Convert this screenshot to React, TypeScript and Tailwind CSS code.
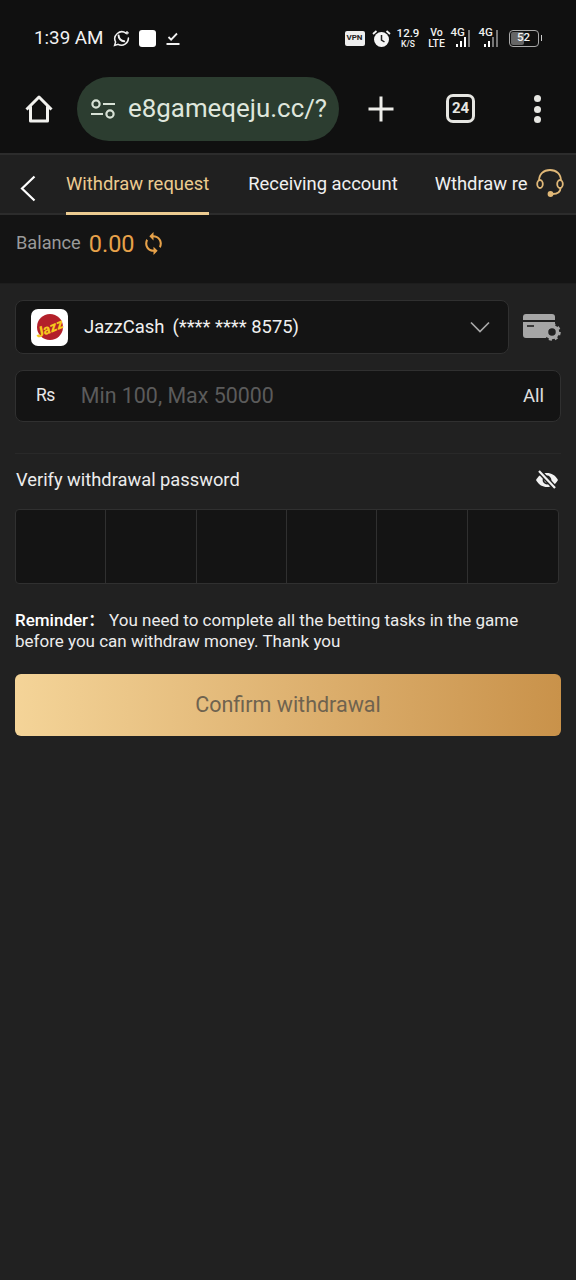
import { MdSync } from 'react-icons/md'

const font = { fontFamily: 'Roboto, sans-serif' }

function WhatsAppIcon() {
  return (
    <svg width="17" height="17" viewBox="0 0 17 17" fill="none" stroke="#f2f2f2" strokeWidth="1.5">
      <path d="M13 3.2A7 7 0 0 0 2.6 12l-1 3.4 3.5-1A7 7 0 0 0 15.4 8" strokeLinecap="round" />
      <path d="M5.6 5.6c0 3 2.6 5.6 5.6 5.6" strokeWidth="2" strokeLinecap="round" />
      <path d="M14 1v3.6M12.2 2.8h3.6" strokeWidth="1.2" />
    </svg>
  )
}

function HomeIcon() {
  return (
    <svg width="30" height="30" viewBox="0 0 30 30" fill="none" stroke="#f1f1ee" strokeWidth="3" strokeLinejoin="round">
      <path d="M2.5 15.5 15 3l12.5 12.5M6.5 12.5V27h17V12.5" />
    </svg>
  )
}

function TuneIcon() {
  return (
    <svg width="26" height="20" viewBox="0 0 26 20" fill="none" stroke="#d8e2d6" strokeWidth="2.2">
      <circle cx="6" cy="5" r="3.6" />
      <circle cx="20" cy="15" r="3.6" />
      <path d="M13 5h12M1 15h12" />
    </svg>
  )
}

function SignalIcon({ faded }: { faded?: boolean }) {
  const bars = faded ? ['#fff', '#fff', '#777', '#777'] : ['#fff', '#fff', '#fff', '#777']
  return (
    <div className="relative h-[18px] w-[19px] leading-none">
      <span className="absolute -top-[2px] left-0 text-[11.5px] font-medium text-[#eee]">4G</span>
      <div className="absolute bottom-0 right-0 flex items-end gap-[2px]">
        {[3, 6, 10, 17].map((h, i) => (
          <div key={i} className="w-[2px]" style={{ height: h, backgroundColor: bars[i] }} />
        ))}
      </div>
    </div>
  )
}

function StatusBar() {
  return (
    <div className="flex h-[75px] items-center bg-[#101010] pl-[34px] pr-[34px] pt-[1px] text-[#f2f2f2]">
      <span className="text-[18.8px] leading-none">1:39 AM</span>
      <div className="ml-[9px] flex items-center gap-[9px]">
        <WhatsAppIcon />
        <div className="h-[17px] w-[17px] rounded-[3px] bg-white" />
        <svg className="ml-[1px]" width="14" height="15" viewBox="0 0 14 15" fill="none" stroke="#f2f2f2" strokeWidth="1.8">
          <path d="m2.5 6 2.6 2.6L11 2.5M.5 13h13" />
        </svg>
      </div>
      <div className="ml-auto flex items-center">
        <div className="flex h-[15px] w-[20px] items-center justify-center rounded-[2px] bg-[#eee] text-[8px] font-bold leading-none text-[#222]">
          VPN
        </div>
        <svg className="ml-[7px]" width="19" height="19" viewBox="0 0 19 19">
          <circle cx="9.5" cy="10.5" r="7.5" fill="#f5f5f5" />
          <path d="M9.5 6v5l3 2" fill="none" stroke="#222" strokeWidth="1.5" />
          <path d="M1 5l3.5-3M18 5l-3.5-3" stroke="#f5f5f5" strokeWidth="1.8" />
        </svg>
        <div className="ml-[6px] flex w-[23px] flex-col items-center leading-none">
          <span className="text-[11.5px] font-medium">12.9</span>
          <span className="text-[8.5px] font-medium">K/S</span>
        </div>
        <div className="ml-[9px] flex w-[16px] flex-col items-center text-[10.5px] font-medium leading-[11px]">
          <span>Vo</span>
          <span>LTE</span>
        </div>
        <div className="ml-[6px] flex gap-[9px]">
          <SignalIcon />
          <SignalIcon faded />
        </div>
        <div className="ml-[11px] flex h-[17px] w-[30px] items-center rounded-[4px] border border-[#aaa] p-[1px]">
          <div className="relative flex h-full w-full items-center justify-center text-[11.5px] font-medium leading-none">
            <div className="absolute inset-y-0 left-0 w-[52%] rounded-[2px] bg-[#666]" />
            <span className="relative">52</span>
          </div>
        </div>
        <div className="ml-[2px] h-[6px] w-[1.5px] bg-[#ccc]" />
      </div>
    </div>
  )
}

function BrowserBar() {
  return (
    <div className="flex h-[78px] items-start bg-[#101010] pt-[2px]">
      <div className="flex w-[77px] justify-center pt-[17px]">
        <HomeIcon />
      </div>
      <div className="flex h-[64px] w-[262px] items-center overflow-hidden rounded-full bg-[#2c3d30] pl-[13px]">
        <TuneIcon />
        <span className="ml-[12px] whitespace-nowrap text-[25.9px] leading-none text-[#dfe6dc]">e8gameqeju.cc/?</span>
      </div>
      <svg className="ml-[28px] mt-[18px]" width="28" height="28" viewBox="0 0 28 28" stroke="#eeeeea" strokeWidth="3">
        <path d="M14 1.5v25M1.5 14h25" />
      </svg>
      <div className="ml-[51px] mt-[17px] flex h-[29px] w-[29px] items-center justify-center rounded-[7px] border-[3px] border-[#e6e6e2] text-[15px] font-bold leading-none text-[#e6e6e2]">
        24
      </div>
      <div className="ml-[59px] mt-[18px] flex flex-col gap-[3.5px]">
        {[0, 1, 2].map((i) => (
          <div key={i} className="h-[7px] w-[7px] rounded-full bg-[#e6e6e2]" />
        ))}
      </div>
    </div>
  )
}

function TabBar() {
  return (
    <div className="relative flex h-[62px] items-start border-y-2 border-[#2c2c2c] bg-[#202020] text-[18.4px] leading-none text-[#f0f0f0]">
      <svg className="ml-[20px] mt-[20px] shrink-0" width="16" height="27" viewBox="0 0 16 27" fill="none" stroke="#fff" strokeWidth="2.2">
        <path d="M14.5 1.500 2 13.500l12.500 12" />
      </svg>
      <div className="relative ml-[30px] flex h-[58px] shrink-0 pt-[20px] text-[#eccb90]">
        Withdraw request
        <div className="absolute -bottom-[2px] left-0 right-0 h-[3px] bg-[#eccb90]" />
      </div>
      <div className="ml-[39px] shrink-0 pt-[20px]">Receiving account</div>
      <div className="ml-[37px] w-[93px] shrink-0 overflow-hidden whitespace-nowrap pt-[20px]">Wthdraw request</div>
      <svg className="absolute right-[11px] top-[12px]" width="30" height="30" viewBox="0 0 30 30" fill="none" stroke="#e0b878" strokeWidth="1.8">
        <path d="M4 14C4 7 8.5 3 15 3s11 4 11 11" />
        <ellipse cx="5" cy="17" rx="2.8" ry="4" />
        <ellipse cx="25" cy="17" rx="2.8" ry="4" />
        <path d="M25.5 21c0 4-3.500 6-8 6" />
        <circle cx="15.500" cy="27" r="2" fill="#e0b878" />
      </svg>
    </div>
  )
}

function BalanceRow() {
  return (
    <div className="flex h-[69px] items-start border-b border-[#1d1d1d] bg-[#141414] pl-[16px] pt-[16px]">
      <span className="mt-[3px] text-[18.2px] leading-none text-[#9a9a9a]">Balance</span>
      <span className="ml-[8px] text-[23.5px] leading-[26px] text-[#e7a24a]">0.00</span>
      <MdSync className="ml-[6px] mt-[0px] text-[#e7a24a]" size={25} />
    </div>
  )
}

function JazzLogo() {
  return (
    <div className="flex h-[37px] w-[37px] shrink-0 items-center justify-center rounded-[7px] bg-white">
      <svg width="35" height="35" viewBox="0 0 35 35">
        <circle cx="18" cy="17" r="13" fill="#b3202a" />
        <text
          x="17.5"
          y="23"
          textAnchor="middle"
          transform="rotate(-22 17.5 18)"
          fontFamily="Roboto, sans-serif"
          fontSize="14"
          fontWeight="900"
          fontStyle="italic"
          fill="#f6c81e"
        >
          Jazz
        </text>
      </svg>
    </div>
  )
}

function CardSettingsIcon() {
  return (
    <svg width="38" height="30" viewBox="0 0 38 30">
      <path d="M3 2h26a3 3 0 0 1 3 3v3H0V5a3 3 0 0 1 3-3Z" fill="#a6a6a6" />
      <path d="M0 10h32v5a9 9 0 0 0-9 11H3a3 3 0 0 1-3-3Z" fill="#a6a6a6" />
      <path d="M4 14h7" stroke="#212121" strokeWidth="1.6" />
      <circle cx="29" cy="20" r="5.5" fill="none" stroke="#a6a6a6" strokeWidth="3.500" />
      <circle cx="29" cy="20" r="7.500" fill="none" stroke="#a6a6a6" strokeWidth="2.500" strokeDasharray="3 2.900" />
    </svg>
  )
}

function EyeOffIcon() {
  return (
    <svg width="24" height="22" viewBox="0 0 24 22">
      <path d="M1 11c3-5 6.500-7 11-7s8 2 11 7c-3 5-6.500 7-11 7S4 16 1 11Z" fill="#f2f2f2" />
      <circle cx="12" cy="11" r="3.500" fill="none" stroke="#212121" strokeWidth="1.8" />
      <path d="M4 2l16 17" stroke="#212121" strokeWidth="5" />
      <path d="M4 2l16 17" stroke="#f2f2f2" strokeWidth="2.200" />
    </svg>
  )
}

function Form() {
  return (
    <div className="px-[15px] pt-[16px]">
      <div className="flex items-center justify-between">
        <div className="flex h-[54px] w-[494px] items-center rounded-[8px] border border-[#303030] bg-[#141414] pl-[15px] pr-[18px]">
          <JazzLogo />
          <span className="ml-[16px] text-[18.5px] leading-none text-[#f0f0f0]">JazzCash</span>
          <span className="ml-[8px] text-[18.4px] leading-none text-[#f0f0f0]">(**** **** 8575)</span>
          <svg className="ml-auto" width="20" height="12" viewBox="0 0 20 12" fill="none" stroke="#a8a8a8" strokeWidth="1.7">
            <path d="m1 1.500 9 9 9-9" />
          </svg>
        </div>
        <CardSettingsIcon />
      </div>
      <div className="mt-[16px] flex h-[52px] items-center rounded-[8px] border border-[#303030] bg-[#141414] pl-[20px] pr-[16px]">
        <span className="text-[17.5px] leading-none tracking-[-0.5px] text-[#e8e8e8]">Rs</span>
        <span className="ml-[26px] text-[21.4px] leading-none text-[#5b5b5b]">Min 100, Max 50000</span>
        <span className="ml-auto text-[18.5px] leading-none text-[#e0e0e0]">All</span>
      </div>
      <div className="mt-[31px] h-px bg-[#292929]" />
      <div className="mt-[15px] flex items-center justify-between pl-[1px] pr-[2px]">
        <span className="text-[18.3px] leading-none text-[#ececec]">Verify withdrawal password</span>
        <EyeOffIcon />
      </div>
      <div className="mr-[2px] mt-[18px] grid h-[75px] grid-cols-6 divide-x divide-[#303030] rounded-[4px] border border-[#303030] bg-[#141414]">
        {[0, 1, 2, 3, 4, 5].map((i) => (
          <div key={i} />
        ))}
      </div>
      <p className="mt-[26px] text-[17px] leading-[21px] text-[#ececec]">
        <span className="font-medium text-white" style={{ fontFamily: 'Roboto, "Noto Sans CJK SC", sans-serif' }}>Reminder：</span>
        <span className="ml-[4px]">You need to complete all the betting tasks in the game before you can withdraw money. Thank you</span>
      </p>
      <button className="mt-[22px] flex h-[62px] w-full items-center justify-center rounded-[6px] bg-gradient-to-r from-[#f4d498] to-[#c9924a] text-[21.5px] leading-none text-[#6f634f]">
        Confirm withdrawal
      </button>
    </div>
  )
}

export default function App() {
  return (
    <div className="h-[1280px] w-[576px] overflow-hidden bg-[#212121]" style={font}>
      <StatusBar />
      <BrowserBar />
      <TabBar />
      <BalanceRow />
      <Form />
    </div>
  )
}
